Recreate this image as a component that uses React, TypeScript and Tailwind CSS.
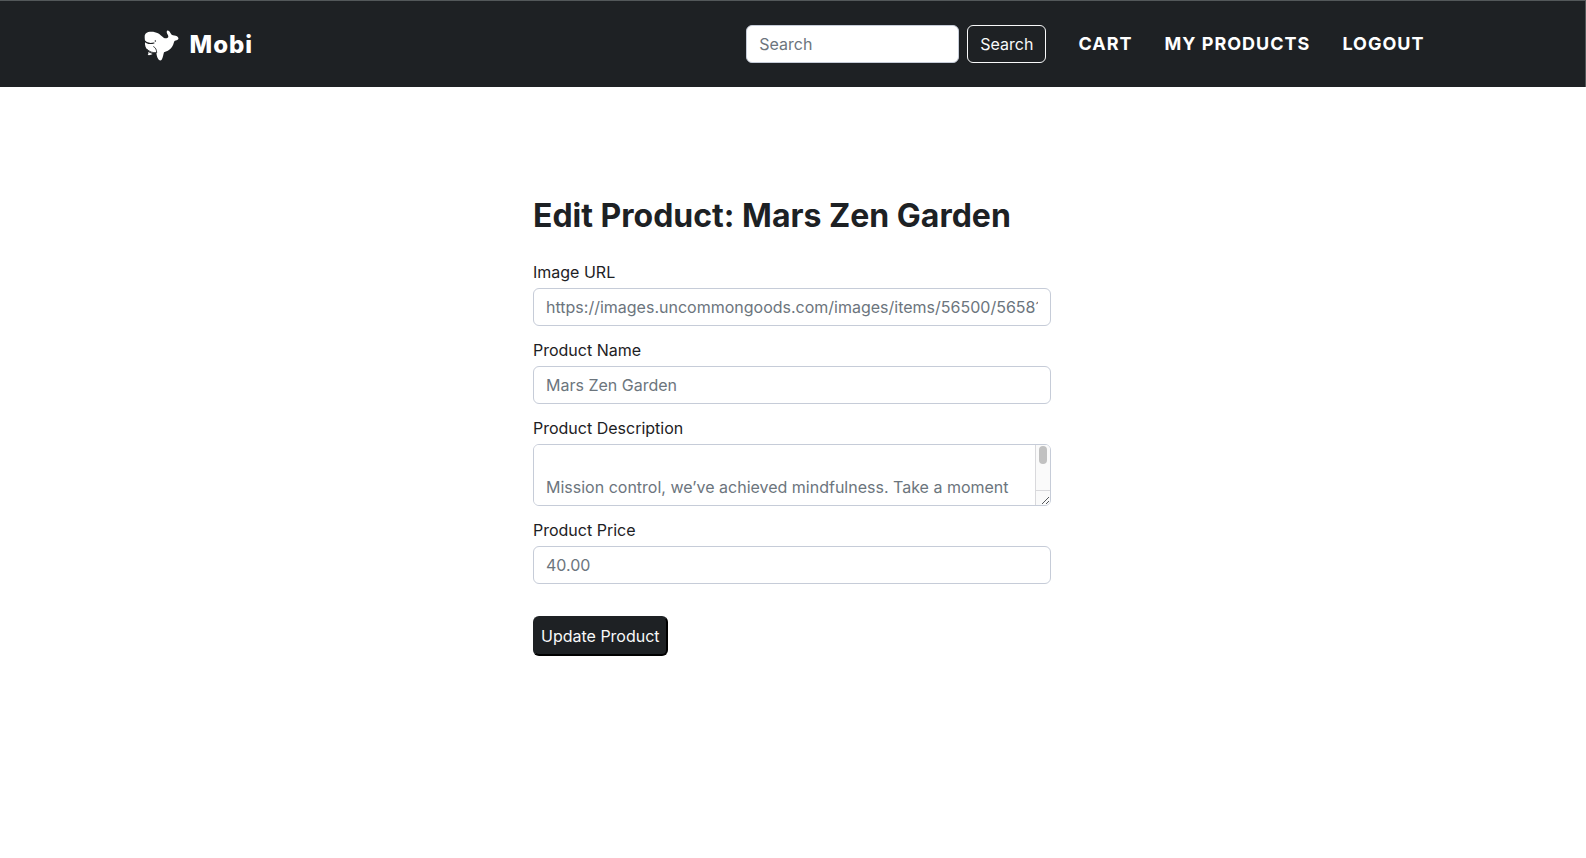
import React from "react";

const field =
  "block w-full rounded-md border border-[#c6ccd8] bg-white px-3 py-[6px] text-base leading-6 text-[#1d2124] placeholder:text-[#6c757d] placeholder:opacity-100";

const description =
  "\nMission control, we’ve achieved mindfulness. Take a moment to rove across a serene Mars scene, now\nmade for your desk.\n";

function WhaleLogo() {
  return (
    <svg viewBox="0 0 132 114" className="h-[38px] w-11" aria-hidden="true">
      <path
        fill="#fff"
        d="M14 34C13 25 18 20 25 18C34 16 46 17 54 22C61 26 65 31 71 35C76 38 83 37 85 33C86 28 80 23 80 18C80 13 84 12 87 15C90 18 92 23 95 26C100 29 106 27 111 31C116 35 117 39 113 41C109 44 105 42 103 46C101 52 99 60 93 67C88 73 80 77 72 79C70 86 69 95 65 101C63 104 57 104 55 100C51 94 50 87 49 80C40 82 29 79 23 72C17 66 14 57 15 47Z"
      />
      <path d="M12 43C19 52 31 54 42 51" fill="none" stroke="#1e2124" strokeWidth="3.5" strokeLinecap="round" />
      <path
        d="M41 62C47 65 50 71 50 80M21 70C29 78 39 81 48 80"
        fill="none"
        stroke="#1e2124"
        strokeWidth="2.5"
        strokeLinecap="round"
      />
      <circle cx="46" cy="45" r="2.2" fill="#1e2124" />
      <path fill="#fff" d="M25 77C28 80 33 82 38 84C34 87 28 88 23 87C26 84 25 81 25 77Z" />
    </svg>
  );
}

function Field({ id, label, children }: { id: string; label: string; children: React.ReactNode }) {
  return (
    <div>
      <label htmlFor={id} className="mb-1 block text-base leading-6">
        {label}
      </label>
      {children}
    </div>
  );
}

function ScrollTrack() {
  return (
    <div
      aria-hidden="true"
      className="pointer-events-none absolute inset-y-px right-px flex w-[15px] flex-col rounded-r-[5px] border-l border-[#d9d9dc] bg-[#fafafa]"
    >
      <div className="flex flex-1 justify-center border-b border-[#d9d9dc] pt-px">
        <div className="h-[18px] w-2 rounded-full bg-[#c1c1c1]" />
      </div>
      <svg viewBox="0 0 14 14" className="h-[14px] w-[14px]" fill="none" stroke="#55585c">
        <path d="M6 13L13 6M10 13L13 10" />
      </svg>
    </div>
  );
}

export default function App() {
  return (
    <div className="min-h-screen bg-white font-[Inter,sans-serif] text-[#1d2124]">
      <header className="border-t border-r border-[#53585a] bg-[#1e2124]">
        <div className="mx-auto flex max-w-[1320px] items-center justify-between py-[23px] pr-7 pl-[7px]">
          <a href="#" className="flex items-center gap-1.5 pt-0.5 text-2xl leading-[38px] font-extrabold tracking-[1px] text-white">
            <WhaleLogo />
            Mobi
          </a>
          <div className="flex items-center gap-8">
            <form className="flex gap-2" onSubmit={(e) => e.preventDefault()}>
              <input
                type="search"
                placeholder="Search"
                aria-label="Search"
                className="w-[213px] rounded-md border border-[#c6ccd8] bg-white px-3 py-[6px] text-base leading-6 text-[#1d2124] placeholder:text-[#6c757d] placeholder:opacity-100"
              />
              <button type="submit" className="rounded-md border border-[#f8f9fa] px-3 py-[6px] text-base leading-6 text-[#f8f9fa]">
                Search
              </button>
            </form>
            <nav className="flex gap-8 text-lg leading-6 font-bold tracking-[1px] text-white">
              <a href="#">CART</a>
              <a href="#">MY PRODUCTS</a>
              <a href="#">LOGOUT</a>
            </nav>
          </div>
        </div>
      </header>
      <main className="mx-auto w-full max-w-[520px] pt-[109px] pr-0.5">
        <h1 className="mb-6 text-[32px] leading-10 font-bold whitespace-nowrap">Edit Product: Mars Zen Garden</h1>
        <form className="flex flex-col gap-3" onSubmit={(e) => e.preventDefault()}>
          <Field id="image" label="Image URL">
            <input id="image" className={field} placeholder="https://images.uncommongoods.com/images/items/56500/56581_1_640px.jpg" />
          </Field>
          <Field id="name" label="Product Name">
            <input id="name" className={field} placeholder="Mars Zen Garden" />
          </Field>
          <Field id="description" label="Product Description">
            <div className="relative">
              <textarea
                id="description"
                rows={2}
                placeholder={description}
                className="block w-full resize-y rounded-md border border-[#c6ccd8] bg-white py-[6px] pr-7 pl-3 text-base leading-6 text-[#1d2124] placeholder:text-[#6c757d] placeholder:opacity-100"
              />
              <ScrollTrack />
            </div>
          </Field>
          <Field id="price" label="Product Price">
            <input id="price" className={field} placeholder="40.00" />
          </Field>
          <button
            type="submit"
            className="mt-5 self-start rounded-md border-2 border-t-[#1e2124] border-r-black border-b-black border-l-[#1e2124] bg-[#1e2124] px-[6px] py-[6px] text-base leading-6 text-[#f8f9fa]"
          >
            Update Product
          </button>
        </form>
      </main>
    </div>
  );
}
